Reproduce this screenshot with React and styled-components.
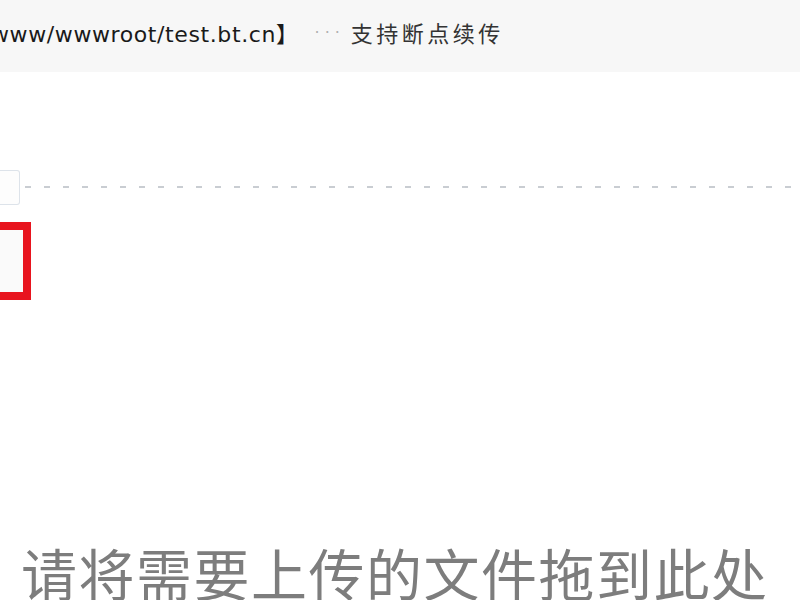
import React from "react";
import styled, { createGlobalStyle } from "styled-components";

const Global = createGlobalStyle`
  html, body { margin: 0; padding: 0; background: #fff; }
  body { width: 800px; height: 600px; overflow: hidden; }
`;

const Page = styled.div`
  width: 800px;
  height: 600px;
  overflow: hidden;
  display: flex;
  flex-direction: column;
  background: #fff;
`;

const Header = styled.div`
  height: 72px;
  box-sizing: border-box;
  padding-bottom: 8px;
  flex: none;
  background: #f7f7f7;
  display: flex;
  align-items: center;
  overflow: hidden;
  white-space: nowrap;
  font-family: "DejaVu Sans", "Noto Sans CJK SC", sans-serif;
  font-size: 22px;
  color: #1a1a1a;
`;

const Path = styled.span`
  margin-left: -17px;
  letter-spacing: 0.6px;
`;

const Dots = styled.span`
  margin-left: 16px;
  color: #b0b0b0;
  letter-spacing: 5px;
  font-size: 16px;
`;

const Note = styled.span`
  margin-left: 6px;
  font-family: "Noto Sans CJK SC", sans-serif;
  font-size: 22px;
  letter-spacing: 3.5px;
  color: #333;
`;

const Body = styled.div`
  display: flex;
  align-items: flex-start;
  margin-top: 98px;
`;

const Side = styled.div`
  width: 30px;
  flex: none;
  display: flex;
  flex-direction: column;
  gap: 17px;
`;

const Tab = styled.div`
  width: 20px;
  height: 35px;
  box-sizing: border-box;
  border: 1px solid #dde3ea;
  border-left: none;
  border-radius: 0 3px 3px 0;
  background: #fdfdfd;
`;

const Marked = styled.div`
  width: 31px;
  height: 78px;
  box-sizing: border-box;
  border: 8px solid #e8141e;
  border-left: none;
  background: #fafafa;
`;

const Rule = styled.div`
  flex: 1;
  height: 2px;
  margin-top: 16px;
  margin-left: -5px;
  background-image: repeating-linear-gradient(
    to right,
    #c9cdd2 0 6px,
    transparent 6px 19px
  );
`;

const Drop = styled.div`
  margin-top: 244px;
  padding-left: 21px;
  font-family: "Noto Sans CJK SC", sans-serif;
  font-size: 56px;
  line-height: 1;
  letter-spacing: 1.5px;
  color: #7d7d7d;
  white-space: nowrap;
`;

export default function App() {
  return (
    <>
      <Global />
      <Page>
        <Header>
          <Path>/www/wwwroot/test.bt.cn】</Path>
          <Dots>···</Dots>
          <Note>支持断点续传</Note>
        </Header>
        <Body>
          <Side>
            <Tab />
            <Marked />
          </Side>
          <Rule />
        </Body>
        <Drop>请将需要上传的文件拖到此处</Drop>
      </Page>
    </>
  );
}
